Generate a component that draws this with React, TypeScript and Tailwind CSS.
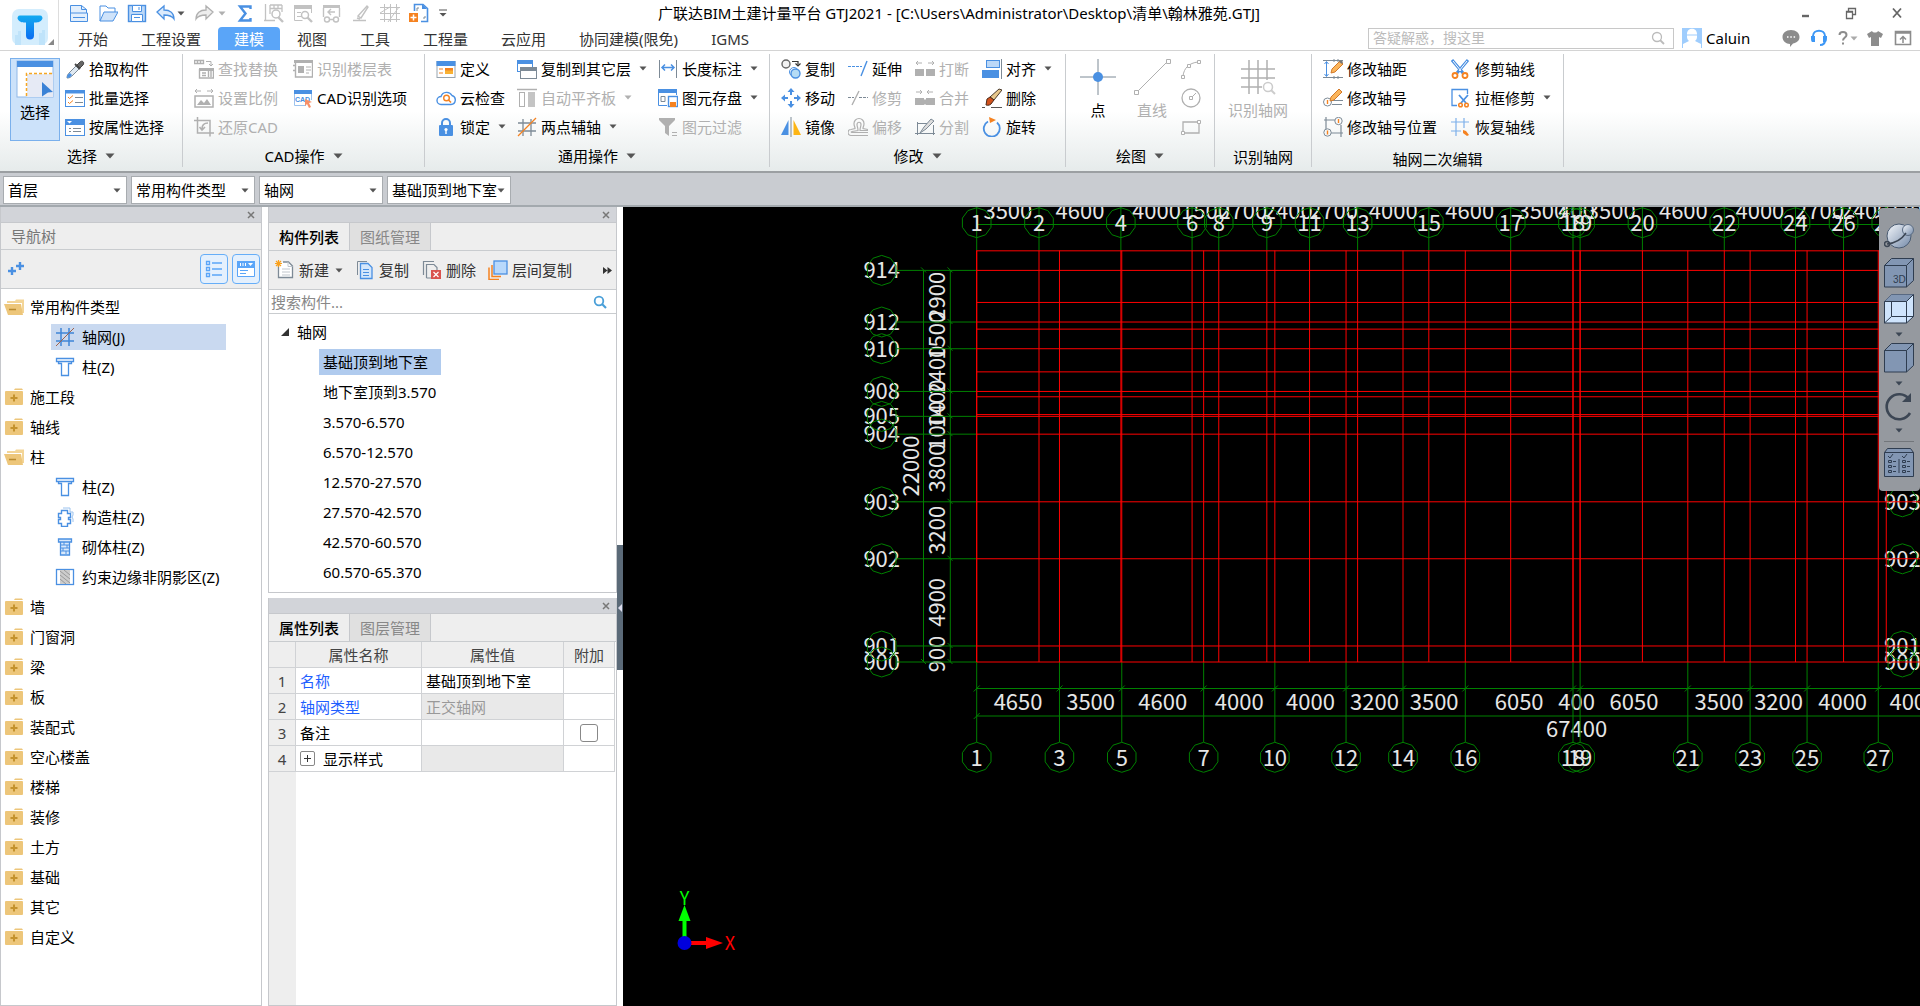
import React, { useState } from 'react';

const B = '#4a90e2';
const G = '#b0b0b0';
const O = '#f58220';
const S = '#7d8a96';

const Svg: React.FC<{ size?: number; box?: number; className?: string; children: React.ReactNode }> = ({
  size = 20,
  box = 20,
  className = '',
  children,
}) => (
  <svg width={size} height={size} viewBox={`0 0 ${box} ${box}`} fill="none" className={`shrink-0 ${className}`} aria-hidden="true">
    {children}
  </svg>
);

const Caret: React.FC<{ className?: string }> = ({ className = 'text-[#555]' }) => (
  <svg width="8" height="5" viewBox="0 0 8 5" className={`shrink-0 ${className}`} aria-hidden="true">
    <path d="M0.5 0.5h7L4 4.5z" fill="currentColor" />
  </svg>
);

// Ribbon icons, all on a 20x20 grid
const icons: Record<string, React.ReactNode> = {
  pick: (
    <>
      <path d="M2 19c0-3 1-4 3-6l6-6 3 3-6 6c-2 2-3 3-6 3z" fill="#dfe9f2" stroke={S} />
      <path d="M2 19c0-3 1-4 3-5l2 2c-1 2-3 3-5 3z" fill={B} />
      <path d="M10 5l5 5" stroke="#444" strokeWidth="1.800" />
      <path d="M12 6l3-3c2-2 5 0 3 3l-3 3z" stroke="#444" fill="#666" />
    </>
  ),
  batch: (
    <>
      <rect x="0.5" y="2.5" width="19" height="16" fill="#fff" stroke={B} />
      <path d="M0 2h20v3.500H0z" fill={B} />
      <path d="M3 9l1.500 1.500L8 7.500M3 14l1.500 1.500L8 12.500" stroke={O} />
      <path d="M10 9.500h8M10 14.500h8" stroke={S} />
    </>
  ),
  attr: (
    <>
      <rect x="0.5" y="2.500" width="19" height="16" fill="#fff" stroke={B} />
      <path d="M0 2h20v6H0z" fill={B} />
      <path d="M2 4h5L4.500 6.500z" fill="#fff" />
      <path d="M4 11.500h2M8 11.500h8M4 14.500h2M8 14.500h8" stroke={S} />
    </>
  ),
  replace: (
    <>
      <path d="M0.500 1.500h9v3h-9zM3.500 1.500v3M6.500 1.500v3" stroke={G} strokeWidth="1.300" />
      <path d="M12 2.500h5v4M15 5l2 2 2-2" stroke={G} />
      <path d="M5 9h15v3H5z" fill={G} />
      <path d="M5.500 10v9h14v-9M8 14h4M8 16.500h4M14.500 12v6M17 12v6" stroke={G} strokeWidth="1.400" />
    </>
  ),
  scale: (
    <>
      <path d="M1 3h6M3 1L1 3l2 2M13 3h6M17 1l2 2-2 2" stroke={G} />
      <rect x="1" y="8" width="18" height="11" stroke={G} strokeWidth="1.500" />
      <path d="M3 17l4-5 3 3 3-4 4 6z" fill={G} />
    </>
  ),
  restore: (
    <>
      <path d="M0 3.500h16v16M3.500 0v16H20" stroke={G} strokeWidth="1.500" />
      <path d="M14 6c-4 0-6 2-6 6M5.500 10l2.500 3 3-3" stroke={G} strokeWidth="1.600" />
    </>
  ),
  floors: (
    <>
      <path d="M2.500 4v14h17V3M0 6.500h3M0 11.500h3" stroke={G} strokeWidth="1.400" />
      <path d="M1 1h19v3H1zM5 7h6v7H5z" fill={G} />
      <path d="M13 8h5M13 11h5M13 14h3" stroke={G} />
    </>
  ),
  cad: (
    <>
      <path d="M1 2h18v4H1z" fill={B} />
      <path d="M1.500 6v11.500H13M18.500 6v6" stroke="#9cc3ee" />
      <text x="2" y="14" fontSize="7" fontWeight="bold" fill={B} fontFamily="Liberation Sans, sans-serif">CAD</text>
      <path d="M12 11l7 3-3 1 2 4-2 1-2-4-2 2z" fill="#f79068" />
    </>
  ),
  define: (
    <>
      <rect x="1" y="2.500" width="18" height="16" fill="#fff" stroke="#9aa5af" />
      <path d="M0.500 2h19v5h-19z" fill={B} />
      <path d="M3 10h4M3 14h4" stroke={O} />
      <path d="M9 9h8v6H9z" fill="#f9b233" />
      <path d="M9 9h8v2.500H9z" fill={O} />
    </>
  ),
  cloud: (
    <>
      <path d="M5 16.500a4 4 0 0 1 0-8 6 6 0 0 1 11-1 4.600 4.600 0 0 1-1 9z" stroke={B} strokeWidth="1.400" />
      <circle cx="10.500" cy="10" r="2.800" stroke={O} strokeWidth="1.400" />
      <path d="M12.500 12l2.500 2.500" stroke={O} strokeWidth="1.600" />
    </>
  ),
  lock: (
    <>
      <path d="M6 9V6a4 4 0 0 1 8 0v3" stroke={B} strokeWidth="2" />
      <rect x="3" y="8" width="14" height="11" rx="1" fill={B} />
      <circle cx="10" cy="12.500" r="1.600" fill="#fff" />
      <path d="M10 13v4" stroke="#fff" strokeWidth="1.400" />
    </>
  ),
  copyFloor: (
    <>
      <rect x="0.500" y="1.500" width="15" height="11" fill="#fff" stroke={B} />
      <path d="M0 1h16v4H0z" fill={B} />
      <rect x="3.500" y="8.500" width="16" height="11" fill="#fff" stroke={S} />
      <path d="M3 8h17v4H3z" fill={S} />
    </>
  ),
  slab: (
    <>
      <path d="M0 1.500h20" stroke={G} strokeWidth="1.500" />
      <rect x="2.500" y="4.500" width="5" height="14" stroke={G} />
      <path d="M11 4h7v15h-7z" fill="#c4c4c4" />
    </>
  ),
  aux: (
    <>
      <path d="M6 2v17M14 2v17M1 6h18M1 14h18" stroke={S} strokeWidth="1.300" />
      <path d="M1 19L19 1" stroke={O} strokeWidth="1.200" />
    </>
  ),
  length: (
    <>
      <path d="M1.500 1v18M18.500 1v18" stroke={S} />
      <path d="M4 8.500h12M7 5.500l-3 3 3 3M13 5.500l3 3-3 3" stroke={B} strokeWidth="1.500" />
    </>
  ),
  save: (
    <>
      <path d="M0.500 1v16.500H9M18.500 1v6" stroke={B} />
      <path d="M0 1h19v4H0z" fill={B} />
      <path d="M3 8.500h4v5H3z" stroke={S} />
      <rect x="10.500" y="8.500" width="9" height="10" fill="#fff" stroke={B} strokeWidth="1.400" />
      <path d="M12 14h6v5h-6z" fill={O} />
    </>
  ),
  filter: (
    <>
      <path d="M1 1h16v2l-6 6v10l-4-3V9L1 3z" fill={G} />
      <path d="M14 15.500h5M14 18.500h5" stroke={G} />
    </>
  ),
  copy: (
    <>
      <circle cx="5" cy="5" r="4" fill="#f2f2f2" stroke="#666" strokeWidth="1.400" />
      <circle cx="13" cy="13" r="4.500" stroke={B} />
      <circle cx="14.500" cy="14.500" r="4.500" fill="#b5dcf5" stroke={B} strokeWidth="1.400" />
      <path d="M11 2.500h6v3M14.500 4.500L17 7l2.500-2.500" stroke="#333" strokeWidth="1.200" />
    </>
  ),
  move: (
    <>
      <path d="M10 0l3.500 4h-7zM10 20l3.500-4h-7zM0 10l4-3.500v7zM20 10l-4-3.500v7z" fill={B} />
      <path d="M10 3v4M10 13v4M3 10h4M13 10h4" stroke={B} strokeWidth="2" />
    </>
  ),
  mirror: (
    <>
      <path d="M7.500 3v15H0z" fill={B} />
      <path d="M12.500 3v15H20z" fill="#fdb515" />
      <path d="M10 0v20" stroke={S} />
    </>
  ),
  extend: (
    <>
      <path d="M0 7.500h14" stroke={B} strokeDasharray="3 1" />
      <path d="M19 2l-6 15" stroke={B} strokeWidth="1.400" />
    </>
  ),
  trim: (
    <>
      <path d="M0 9.500h6M11 9.500h9" stroke={S} strokeDasharray="3 1" />
      <path d="M11 3L4 17" stroke={G} strokeWidth="1.400" />
    </>
  ),
  offset: (
    <path
      d="M20 18.500H3a3 3 0 0 1 0-6l4-1c0-2-1-2-1-5a5 5 0 0 1 10 0c0 3-1 3-1 5l5 1M20 15.500H4c-1 0-1-1 0-1l6-1c0-3-1-4-1-6 0-3 4-3 4 0 0 2-1 3-1 6h8"
      stroke={G}
      strokeWidth="1.200"
    />
  ),
  breakIt: (
    <>
      <path d="M0 10h9v7H0zM11 10h9v7h-9z" fill={G} />
      <path d="M1 4h6M3 2L1 4l2 2M13 4h6M17 2l2 2-2 2" stroke={G} />
    </>
  ),
  merge: (
    <>
      <path d="M0 10h9v7H0zM9 11.500h2v5H9zM11 10h9v7h-9z" fill={G} />
      <path d="M1 4h6M5 2l2 2-2 2M12 4h6M14 2l-2 2 2 2" stroke={G} />
    </>
  ),
  split: (
    <>
      <path d="M2 6.500h10M2.500 5v13M0 16.500h20M18.500 8v10" stroke={S} />
      <path d="M5 16l4-6 7-8 3 2-8 8z" fill="#ddd" stroke={S} />
    </>
  ),
  align: (
    <>
      <rect x="4.500" y="1.500" width="13" height="7" fill="#bcd8f7" stroke={B} />
      <path d="M0 11h17v8H0z" fill={B} />
      <path d="M19.500 0v20" stroke={S} />
    </>
  ),
  erase: (
    <>
      <path d="M8 9l9-8 3 1-8 10z" fill="#e8c88c" stroke="#4a3a2a" />
      <path d="M5 11l3-2 4 3-3 4c-2 2-5 1-5 1z" fill="#d2521c" stroke="#4a2a1a" />
      <path d="M0 19.500h3M9 19.500h11" stroke="#555" />
    </>
  ),
  rotate: (
    <>
      <path d="M6 4.500a8 8 0 1 0 9 1" stroke={B} strokeWidth="1.800" />
      <path d="M7 0l7 3-6 3z" fill={O} />
    </>
  ),
  axisGap: (
    <>
      <path d="M3.500 3v14M1.500 5l2-2.500 2 2.500M1.500 15l2 2.500 2-2.500" stroke={B} />
      <path d="M0 1.500h20M0 18.500h20M11 0v3M15 0v3M11 17v3M15 17v3" stroke={S} />
      <path d="M8 14l1-4 8-8 3 3-8 8z" fill="#fbb55b" stroke="#d27a2a" />
      <path d="M16 3l2-2 2 2-1 2z" fill="#777" />
    </>
  ),
  axisNo: (
    <>
      <path d="M9 12.500h11M9 16.500h10" stroke={S} />
      <circle cx="4.500" cy="14" r="4" stroke={S} />
      <path d="M4.500 12v4" stroke={O} strokeWidth="1.400" />
      <path d="M7 13l1-4 8-8 3 3-8 8z" fill="#fbb55b" stroke="#d27a2a" />
    </>
  ),
  axisPos: (
    <>
      <path d="M3 0v12M1 3h11M8 16h12M18 8v12" stroke={S} strokeWidth="1.200" />
      <circle cx="15.500" cy="4" r="3.700" stroke={S} />
      <circle cx="4.500" cy="15.500" r="3.700" stroke={S} />
      <path d="M15.500 2v4M4.500 13.500v4" stroke={O} strokeWidth="1.400" />
    </>
  ),
  scissors: (
    <>
      <path d="M1 1l11 13M17 1L6 14" stroke={B} strokeWidth="3" />
      <path d="M2 2l8 10M16 2L8 12" stroke="#fff" />
      <circle cx="4" cy="16.500" r="2.500" stroke={O} strokeWidth="1.800" />
      <circle cx="14" cy="16.500" r="2.500" stroke={O} strokeWidth="1.800" />
    </>
  ),
  boxTrim: (
    <>
      <path d="M16.500 6V1.500H1v16h5" stroke={B} strokeWidth="1.300" />
      <path d="M8 7l7 8M17 7l-7 8" stroke={B} strokeWidth="1.800" />
      <circle cx="9.500" cy="17" r="1.800" stroke={O} strokeWidth="1.500" />
      <circle cx="15.500" cy="17" r="1.800" stroke={O} strokeWidth="1.500" />
    </>
  ),
  recover: (
    <>
      <path d="M5 1v18M13 1v10M0 5h18M0 14h10" stroke="#7db0ea" strokeWidth="1.200" />
      <path d="M12 13l3 1 3 4-2 1-4-3z" fill={O} />
    </>
  ),
  arc: (
    <>
      <path d="M2 17C3 9 8 4 17 3" stroke={G} />
      <path d="M0.500 16.500h3v3h-3zM6.500 5.500h3v3h-3zM16.500 1.500h3v3h-3z" fill="#fff" stroke={G} />
    </>
  ),
  circle: (
    <>
      <circle cx="10" cy="10" r="9" stroke={G} strokeWidth="1.300" />
      <path d="M10 10l5-5" stroke={G} />
      <path d="M8.500 8.500h3v3h-3z" fill="#fff" stroke={G} />
    </>
  ),
  rect: (
    <>
      <path d="M2 5h16v11H2z" stroke={G} strokeWidth="1.300" />
      <path d="M0.500 14.500h3v3h-3zM16.500 3.500h3v3h-3z" fill="#fff" stroke={G} />
    </>
  ),
};

interface Item {
  icon: string;
  label: string;
  off?: boolean;
  caret?: boolean;
}

const RibbonColumn: React.FC<{ items: Item[] }> = ({ items }) => (
  <div className="flex shrink-0 flex-col">
    {items.map((it) => (
      <button
        key={it.label}
        type="button"
        disabled={it.off}
        className={`flex h-[29px] items-center gap-1 whitespace-nowrap ${it.off ? 'text-[#b0b0b0]' : 'text-black'}`}
      >
        <Svg>{icons[it.icon]}</Svg>
        <span>{it.label}</span>
        {it.caret && <Caret className={it.off ? 'ml-1 text-[#b0b0b0]' : 'ml-1 text-[#555]'} />}
      </button>
    ))}
  </div>
);

const RibbonGroup: React.FC<{ title: string; caret?: boolean; className: string; children: React.ReactNode }> = ({
  title,
  caret,
  className,
  children,
}) => (
  <section className={`mt-[3px] mb-1 flex shrink-0 flex-col border-r border-[#c9cccf] ${className}`}>
    <div className="flex h-[87px] pl-[11px]">{children}</div>
    <div className={`flex flex-1 items-center justify-center gap-2 whitespace-nowrap text-black ${caret ? 'pt-1' : 'pt-2'}`}>
      {title}
      {caret && (
        <svg width="10" height="6" viewBox="0 0 10 6" aria-hidden="true">
          <path d="M0.500 0.500h9L5 5.500z" fill="#555" />
        </svg>
      )}
    </div>
  </section>
);

const QuickAccess: React.FC = () => (
  <div className="flex h-[26px] items-center gap-[9px] pl-[10px]">
    <button type="button" aria-label="新建">
      <Svg>
        <path d="M1.500 10V2.500h11l5 4V10M1.500 10h17v8.500h-17z" fill="#e3effc" stroke={B} />
        <path d="M12.500 2.500v4h5M4 14.500h12" stroke={B} />
      </Svg>
    </button>
    <button type="button" aria-label="打开">
      <Svg>
        <path d="M2 18V3h6l2 2h7v4" stroke={B} />
        <path d="M2 18L6 9h14l-5 9z" fill="#cfe3fa" stroke={B} />
      </Svg>
    </button>
    <button type="button" aria-label="保存">
      <Svg>
        <rect x="1.500" y="2.500" width="17" height="16" fill="#bcd8f7" stroke={B} strokeWidth="1.400" />
        <path d="M5.500 2.500h9v6h-9zM4.500 11.500h11v7h-11z" fill="#fff" stroke={B} />
        <path d="M12 4v3M7 14.500h6" stroke={B} />
      </Svg>
    </button>
    <button type="button" aria-label="撤销" className="flex items-center gap-px">
      <Svg>
        <path d="M1 9l7-6v4c6 0 10 3 10 9-2-3-5-4-10-4v4z" fill="#dcebfc" stroke={B} strokeWidth="1.300" />
      </Svg>
      <Caret />
    </button>
    <button type="button" aria-label="重做" className="flex items-center gap-1">
      <Svg>
        <path d="M19 9l-7-6v4C6 7 2 10 2 16c2-3 5-4 10-4v4z" fill="#eee" stroke={G} strokeWidth="1.300" />
      </Svg>
      <Caret className="text-[#b0b0b0]" />
    </button>
    <button type="button" aria-label="汇总计算">
      <Svg>
        <path d="M15.500 6V3.500H5l5.500 7L5 17.500h10.500V15" stroke={B} strokeWidth="2.400" />
      </Svg>
    </button>
    <button type="button" aria-label="查看工程量">
      <Svg>
        <path d="M1.500 1v17M0 17.500h11M6 2h12M6 2v9M6 5.500h12M10 2v4M14 2v4M18 2v7" stroke="#c2c2c2" strokeWidth="1.300" />
        <circle cx="12" cy="11" r="4" stroke="#c2c2c2" strokeWidth="1.500" />
        <path d="M14 14l5 5" stroke="#c2c2c2" strokeWidth="2.400" />
      </Svg>
    </button>
    <button type="button" aria-label="查看计算式">
      <Svg>
        <path d="M1 2h18v4H1z" fill="#c2c2c2" />
        <path d="M1.500 5v12.500h8M18.500 5v5M4 9.500h4M4 13.500h4" stroke="#c2c2c2" />
        <circle cx="12" cy="12" r="3.500" stroke="#c2c2c2" strokeWidth="1.500" />
        <path d="M14.500 14.500L19 19" stroke="#c2c2c2" strokeWidth="2.400" />
      </Svg>
    </button>
    <button type="button" aria-label="返回">
      <Svg>
        <path d="M1 2h17v3H1z" fill="#c2c2c2" />
        <path d="M1.500 5v9M17.500 5v9M6 9h7M9 6L6 9l3 3M8 16.500h4" stroke="#c2c2c2" strokeWidth="1.400" />
        <circle cx="5" cy="16.500" r="2.500" stroke="#c2c2c2" strokeWidth="1.400" />
        <circle cx="14" cy="16.500" r="2.500" stroke="#c2c2c2" strokeWidth="1.400" />
      </Svg>
    </button>
    <button type="button" aria-label="编辑">
      <Svg>
        <path d="M7 13l9-10 1 1-7 11zM2 17.500h13M6 15l3 1" stroke="#c2c2c2" strokeWidth="1.400" />
      </Svg>
    </button>
    <button type="button" aria-label="网格">
      <Svg>
        <path d="M4.500 1v18M10.500 1v18M16.500 1v18M0 4.500h20M0 10.500h20M0 16.500h20M0 10l10-6M8 19L19 4" stroke="#c2c2c2" />
      </Svg>
    </button>
    <button type="button" aria-label="导入" className="flex items-center gap-[10px]">
      <Svg>
        <path d="M5.500 8V1.500H14l4.500 4v13H12" stroke={B} strokeWidth="1.600" />
        <path d="M13 1v5h5" fill={B} />
        <path d="M8 8V5h2M16 13v2h-2" stroke={S} />
        <path d="M0 10h9v9H0z" fill={O} />
        <path d="M4.500 11.500v6M1.500 14.500h6" stroke="#fff" strokeWidth="1.500" />
      </Svg>
      <svg width="8" height="8" viewBox="0 0 8 8" aria-hidden="true">
        <path d="M0 1h8" stroke="#555" />
        <path d="M0.500 4h7L4 7.500z" fill="#555" />
      </svg>
    </button>
  </div>
);

const tabs = ['开始', '工程设置', '建模', '视图', '工具', '工程量', '云应用', '协同建模(限免)', 'IGMS'];

const Header: React.FC = () => {
  const [active, setActive] = useState('建模');
  return (
    <header className="flex h-[51px] border-b border-[#d4d4d4] bg-white">
      <div className="flex w-[59px] items-end gap-0 border-r border-[#ddd] pb-[5px] pl-3">
        <svg width="36" height="36" viewBox="0 0 36 36" aria-hidden="true">
          <defs>
            <linearGradient id="logoT" x1="0" y1="0" x2="0" y2="1">
              <stop offset="0" stopColor="#12aaf0" />
              <stop offset="1" stopColor="#0b6df2" />
            </linearGradient>
          </defs>
          <rect width="36" height="36" rx="7" fill="#d3edfd" />
          <path d="M3 36V26h3v-4h3v14M27 36V24h3v-3h3v15" fill="#bfe3fa" />
          <path d="M8 6.500h20a2.500 2.500 0 0 1 2 4c-2 3-5 3-8 3v13a4 4 0 0 1-8 0v-13c-3 0-6 0-8-3a2.500 2.500 0 0 1 2-4z" fill="url(#logoT)" />
        </svg>
        <svg width="6" height="6" viewBox="0 0 6 6" aria-hidden="true">
          <path d="M6 0v6H0z" fill="#888" />
        </svg>
      </div>
      <div className="flex min-w-0 flex-1 flex-col">
        <div className="flex h-[26px] items-center justify-between">
          <div className="flex-1">
            <QuickAccess />
          </div>
          <h1 className="mr-[45px] whitespace-nowrap text-black">
            广联达BIM土建计量平台 GTJ2021 - [C:\Users\Administrator\Desktop\清单\翰林雅苑.GTJ]
          </h1>
          <div className="flex flex-1 items-center justify-end gap-8 pr-4 text-[#666]">
            <button type="button" aria-label="最小化">
              <Svg size={14} box={14}><path d="M4 10h7" stroke="currentColor" strokeWidth="2.400" /></Svg>
            </button>
            <button type="button" aria-label="还原">
              <Svg size={14} box={14}>
                <path d="M4.500 5V2.500h7v6H9M4 2.500h8" stroke="currentColor" strokeWidth="1.300" />
                <path d="M2.500 5.500h6v7h-6zM2 6h7" stroke="currentColor" strokeWidth="1.300" />
              </Svg>
            </button>
            <button type="button" aria-label="关闭">
              <Svg size={14} box={14}><path d="M3 2.500l8 9M11 2.500l-8 9" stroke="currentColor" strokeWidth="1.800" /></Svg>
            </button>
          </div>
        </div>
        <div className="flex flex-1 items-center justify-between">
          <nav className="flex gap-px self-end pl-[3px]">
            {tabs.map((t) => (
              <button
                key={t}
                type="button"
                onClick={() => setActive(t)}
                className={`h-[23px] rounded-t px-4 leading-[22px] ${
                  active === t ? 'bg-[#5aa5f8] text-white' : 'text-[#333]'
                }`}
              >
                {t}
              </button>
            ))}
          </nav>
          <div className="flex items-center pr-2">
            <label className="flex h-[21px] w-[306px] items-center border border-[#c8c8c8] pr-2">
              <input
                type="text"
                aria-label="搜索"
                placeholder="答疑解惑，搜这里"
                className="min-w-0 flex-1 bg-transparent px-1 text-sm outline-none placeholder:text-[#bbb]"
              />
              <Svg size={14} box={14}>
                <circle cx="6" cy="6" r="4.500" stroke="#bbb" strokeWidth="1.300" />
                <path d="M9 9l4 4" stroke="#bbb" strokeWidth="1.800" />
              </Svg>
            </label>
            <Svg className="ml-2">
              <path d="M0 0h20v20H0z" fill="#9fcdfd" />
              <path d="M5 6c0-7 10-7 10 0v3c0 2-1 3-2 4l6 3v4H1v-4l6-3c-1-1-2-2-2-4z" fill="#fff" />
              <path d="M5 7h10" stroke="#9fcdfd" />
            </Svg>
            <span className="ml-1 w-[76px] text-black">Caluin</span>
            <button type="button" aria-label="消息" className="mr-[10px] text-[#8c8c8c]">
              <Svg size={18} box={18}>
                <path d="M9 1c5 0 8.500 3 8.500 7S14 14 11 14.500L8 18v-3C4 15 0.500 12 0.500 8S4 1 9 1z" fill="currentColor" />
                <path d="M5 8h1.500M8.300 8h1.500M11.600 8h1.500" stroke="#fff" strokeWidth="1.500" />
              </Svg>
            </button>
            <button type="button" aria-label="客服" className="mr-2">
              <Svg size={18} box={18}>
                <path d="M3 10V7c0-7 12-7 12 0v4c0 3-2 5-5 5" stroke="#3d97f5" strokeWidth="2" />
                <path d="M1 7h4v6H3c-2 0-2-2-2-6zM17 7h-4v6h2c2 0 2-2 2-6z" fill="#3d97f5" />
              </Svg>
            </button>
            <button type="button" aria-label="帮助" className="mr-2 flex items-center text-[#8c8c8c]">
              <Svg size={14} box={14}>
                <path d="M3.500 4c0-4 7-4 7 0 0 2.500-3.500 2.500-3.500 5.500" stroke="currentColor" strokeWidth="2" />
                <path d="M6 11.500h2v2H6z" fill="currentColor" />
              </Svg>
              <Caret className="text-[#aaa]" />
            </button>
            <button type="button" aria-label="皮肤" className="mr-[10px] text-[#8c8c8c]">
              <Svg size={18} box={18}>
                <path d="M6 2c1 2 5 2 6 0l5 3-2 4-2-1v9H5V8L3 9 1 5z" fill="currentColor" />
              </Svg>
            </button>
            <button type="button" aria-label="收起" className="text-[#8c8c8c]">
              <Svg size={18} box={18}>
                <path d="M1.500 2.500h15v13h-15zM1 4h16" stroke="currentColor" strokeWidth="1.600" />
                <path d="M9 14V8M6 10.500l3-3 3 3" stroke="currentColor" strokeWidth="1.500" />
              </Svg>
            </button>
          </div>
        </div>
      </div>
    </header>
  );
};

const Ribbon: React.FC = () => (
  <div className="flex h-[122px] overflow-hidden border-b-2 border-[#9b9fa2] bg-linear-to-b from-white from-50% to-[#e6ebeb]">
    <RibbonGroup title="选择" caret className="w-[183px]">
      <button
        type="button"
        className="mr-[5px] -ml-px flex h-[83px] w-[50px] shrink-0 flex-col items-center gap-1 self-end border border-[#7ab0ec] bg-[#cce2fa] pt-px text-black"
      >
        <Svg size={38} box={38}>
          <rect x="1" y="1" width="36" height="36" fill="#fff" stroke="#8fb8e8" />
          <path d="M1 1h36v6H1z" fill={B} />
          <path d="M11 14h26v23H11z" fill="#e6eaf5" />
          <path d="M10.500 36V13.500H36" stroke="#f5a623" strokeWidth="1.500" strokeDasharray="3 2" />
          <path d="M26 22l11 10-5 .5-6 4z" fill="#3b82d6" />
        </Svg>
        选择
      </button>
      <RibbonColumn
        items={[
          { icon: 'pick', label: '拾取构件' },
          { icon: 'batch', label: '批量选择' },
          { icon: 'attr', label: '按属性选择' },
        ]}
      />
    </RibbonGroup>
    <RibbonGroup title="CAD操作" caret className="w-[242px]">
      <div className="flex gap-[15px]">
        <RibbonColumn
          items={[
            { icon: 'replace', label: '查找替换', off: true },
            { icon: 'scale', label: '设置比例', off: true },
            { icon: 'restore', label: '还原CAD', off: true },
          ]}
        />
        <RibbonColumn
          items={[
            { icon: 'floors', label: '识别楼层表', off: true },
            { icon: 'cad', label: 'CAD识别选项' },
          ]}
        />
      </div>
    </RibbonGroup>
    <RibbonGroup title="通用操作" caret className="w-[345px]">
      <div className="flex gap-[11px]">
        <RibbonColumn
          items={[
            { icon: 'define', label: '定义' },
            { icon: 'cloud', label: '云检查' },
            { icon: 'lock', label: '锁定', caret: true },
          ]}
        />
        <RibbonColumn
          items={[
            { icon: 'copyFloor', label: '复制到其它层', caret: true },
            { icon: 'slab', label: '自动平齐板', off: true, caret: true },
            { icon: 'aux', label: '两点辅轴', caret: true },
          ]}
        />
        <RibbonColumn
          items={[
            { icon: 'length', label: '长度标注', caret: true },
            { icon: 'save', label: '图元存盘', caret: true },
            { icon: 'filter', label: '图元过滤', off: true },
          ]}
        />
      </div>
    </RibbonGroup>
    <RibbonGroup title="修改" caret className="w-[296px]">
      <div className="flex gap-[13px]">
        <RibbonColumn
          items={[
            { icon: 'copy', label: '复制' },
            { icon: 'move', label: '移动' },
            { icon: 'mirror', label: '镜像' },
          ]}
        />
        <RibbonColumn
          items={[
            { icon: 'extend', label: '延伸' },
            { icon: 'trim', label: '修剪', off: true },
            { icon: 'offset', label: '偏移', off: true },
          ]}
        />
        <RibbonColumn
          items={[
            { icon: 'breakIt', label: '打断', off: true },
            { icon: 'merge', label: '合并', off: true },
            { icon: 'split', label: '分割', off: true },
          ]}
        />
        <RibbonColumn
          items={[
            { icon: 'align', label: '对齐', caret: true },
            { icon: 'erase', label: '删除' },
            { icon: 'rotate', label: '旋转' },
          ]}
        />
      </div>
    </RibbonGroup>
    <RibbonGroup title="绘图" caret className="w-[149px]">
      <button type="button" className="mr-4 ml-[2px] flex flex-col items-center gap-1 pt-1 text-black">
        <Svg size={38} box={38}>
          <path d="M19 1v36M1 19h36" stroke={S} />
          <circle cx="19" cy="19" r="5" fill={B} />
        </Svg>
        点
      </button>
      <button type="button" disabled className="mr-[10px] flex flex-col items-center gap-1 pt-1 text-[#b0b0b0]">
        <Svg size={38} box={38}>
          <path d="M4 34L35 3" stroke={G} />
          <path d="M1.500 32.500h4v4h-4zM33.500 1.500h4v4h-4z" fill="#fff" stroke={G} />
        </Svg>
        直线
      </button>
      <div className="flex flex-col">
        {['arc', 'circle', 'rect'].map((n) => (
          <button key={n} type="button" disabled aria-label={n} className="flex h-[29px] items-center">
            <Svg>{icons[n]}</Svg>
          </button>
        ))}
      </div>
    </RibbonGroup>
    <RibbonGroup title="识别轴网" className="w-[97px]">
      <button type="button" disabled className="ml-[2px] flex flex-col items-center gap-1 pt-1 text-[#b0b0b0]">
        <Svg size={38} box={38}>
          <path d="M10 2v34M19 2v34M28 2v20M2 11h34M2 20h34M2 29h21" stroke={G} strokeWidth="1.500" />
          <circle cx="29" cy="29" r="4.500" stroke="#ccc" strokeWidth="1.500" fill="#fff" />
          <path d="M32 32l4 4" stroke="#ccc" strokeWidth="2" />
        </Svg>
        识别轴网
      </button>
    </RibbonGroup>
    <RibbonGroup title="轴网二次编辑" className="w-[252px]">
      <div className="flex gap-[14px]">
        <RibbonColumn
          items={[
            { icon: 'axisGap', label: '修改轴距' },
            { icon: 'axisNo', label: '修改轴号' },
            { icon: 'axisPos', label: '修改轴号位置' },
          ]}
        />
        <RibbonColumn
          items={[
            { icon: 'scissors', label: '修剪轴线' },
            { icon: 'boxTrim', label: '拉框修剪', caret: true },
            { icon: 'recover', label: '恢复轴线' },
          ]}
        />
      </div>
    </RibbonGroup>
  </div>
);

const combos = [
  { label: '楼层', value: '首层' },
  { label: '构件分类', value: '常用构件类型' },
  { label: '构件类型', value: '轴网' },
  { label: '构件', value: '基础顶到地下室' },
];

const ComboBar: React.FC = () => (
  <div className="flex h-[34px] items-end gap-1 border-b-2 border-[#a3a9ae] bg-[#c9ccd1] pb-px pl-[3px]">
    {combos.map((c) => (
      <div key={c.label} className="relative">
        <select
          aria-label={c.label}
          defaultValue={c.value}
          className="block h-[28px] w-[124px] appearance-none border border-[#a8acb0] bg-white pl-1 text-black outline-none"
        >
          <option>{c.value}</option>
        </select>
        <Caret className="pointer-events-none absolute top-3 right-[6px] text-[#555]" />
      </div>
    ))}
  </div>
);

const PanelBar: React.FC = () => (
  <div className="flex h-4 shrink-0 items-center justify-end border-b border-[#c6c8cc] bg-[#d2d4d9] pr-[6px]">
    <button type="button" aria-label="关闭面板">
      <Svg size={8} box={8}>
        <path d="M1 1l6 6M7 1L1 7" stroke="#777" strokeWidth="1.500" />
      </Svg>
    </button>
  </div>
);

const FolderOpen = () => (
  <Svg>
    <path d="M3 4h8l1-1.500h8V16h-2V6H3z" fill="#f3d597" />
    <path d="M0 7h17l2 11H4z" fill="#edc67a" />
    <path d="M5 12.500h7" stroke="#b98a2f" strokeWidth="1.500" />
  </Svg>
);

const FolderClosed = () => (
  <Svg>
    <path d="M10 3l1-1.500h7l1 1.500z" fill="#edc67a" />
    <rect x="1" y="4" width="18" height="14" rx="1" fill="#edc67a" />
    <path d="M10 7.500v7M6.500 11h7" stroke="#c4922f" strokeWidth="2" />
  </Svg>
);

const treeIcons: Record<string, React.ReactNode> = {
  grid: (
    <>
      <path d="M6 1v18M14 1v18M1 6h18M1 14h18" stroke="#3f85d6" strokeWidth="1.500" />
      <path d="M1 19L19 1" stroke="#a0624a" />
    </>
  ),
  column: <path d="M1.500 1.500h17v3h-2v2h-3v12h-7v-12h-3v-2h-2zM4 4.500h12" stroke={B} strokeWidth="1.300" fill="#fff" />,
  structural: (
    <>
      <path d="M8 1h7v4h3v3l-1 2 1 2v3" stroke="#9cc3ee" />
      <path d="M6.500 3.500h6v3h3v4h-2v2h2v4h-3v3h-6v-3h-3v-4h2v-2h-2v-4h3z" stroke={B} strokeWidth="1.400" fill="#fff" />
    </>
  ),
  masonry: (
    <>
      <path d="M3.500 2h13v3h-13zM5.500 5h9v13h-9z" fill="#d9e9fb" stroke={B} strokeWidth="1.300" />
      <path d="M6 8h8M6 11h8M6 14h8M9 5v3M12 8v3M8 11v3M11 14v3" stroke={B} />
    </>
  ),
  hatch: (
    <>
      <rect x="1.500" y="2.500" width="17" height="15" fill="#fff" stroke={B} strokeWidth="1.300" />
      <path d="M5 3h10v14H5z" fill="#ccc" />
      <path d="M5 4l10 8M5 8l10 8M5 12l6 5M9 3l6 5" stroke="#999" />
    </>
  ),
};

interface TreeNode {
  label: string;
  open?: boolean;
  children?: { label: string; icon: string; selected?: boolean }[];
}

const tree: TreeNode[] = [
  {
    label: '常用构件类型',
    open: true,
    children: [
      { label: '轴网(J)', icon: 'grid', selected: true },
      { label: '柱(Z)', icon: 'column' },
    ],
  },
  { label: '施工段' },
  { label: '轴线' },
  {
    label: '柱',
    open: true,
    children: [
      { label: '柱(Z)', icon: 'column' },
      { label: '构造柱(Z)', icon: 'structural' },
      { label: '砌体柱(Z)', icon: 'masonry' },
      { label: '约束边缘非阴影区(Z)', icon: 'hatch' },
    ],
  },
  ...['墙', '门窗洞', '梁', '板', '装配式', '空心楼盖', '楼梯', '装修', '土方', '基础', '其它', '自定义'].map((label) => ({ label })),
];

const NavTree: React.FC = () => (
  <aside className="flex w-[262px] shrink-0 flex-col border-x border-b border-[#c6c8cc]">
    <PanelBar />
    <h2 className="flex h-[27px] items-center border-b border-[#c9cccf] bg-[#eee] pl-[10px] text-[#777]">导航树</h2>
    <div className="flex h-[39px] items-center justify-between border-b border-[#c9cccf] bg-[#eee] pr-px pl-[7px]">
      <button type="button" aria-label="展开">
        <Svg size={16} box={16}>
          <path d="M4 6v8M0 10h8M12 1v8M8 5h8" stroke={B} strokeWidth="2.400" />
        </Svg>
      </button>
      <div className="flex gap-1">
        <button type="button" aria-label="列表" className="flex h-[30px] w-7 items-center justify-center rounded border border-[#66aef8] bg-[#e4f0fd]">
          <Svg size={18} box={18}>
            <path d="M1.500 1.500h3v3h-3zM1.500 7.500h3v3h-3zM1.500 13.500h3v3h-3zM7 3h10M7 9h10M7 15h10" stroke="#5aa5f8" strokeWidth="1.300" />
          </Svg>
        </button>
        <button type="button" aria-label="卡片" className="flex h-[30px] w-7 items-center justify-center rounded border border-[#66aef8] bg-[#e4f0fd]">
          <Svg size={20}>
            <path d="M1.500 2.500h17v15h-17z" fill="#fff" stroke="#5aa5f8" />
            <path d="M1 2h18v7H1z" fill="#5aa5f8" />
            <path d="M4.500 4v3M7 4v3M9.500 4v3" stroke="#fff" />
            <path d="M12 4h5l-2.500 3z" fill="#fff" />
            <path d="M4 11.500h8M4 14.500h6" stroke="#5aa5f8" />
          </Svg>
        </button>
      </div>
    </div>
    <ul className="flex-1 overflow-hidden bg-white pt-[3px]">
      {tree.map((node) => (
        <li key={node.label}>
          <div className="flex h-[30px] items-center gap-[6px] pl-[3px] text-black">
            {node.open ? <FolderOpen /> : <FolderClosed />}
            {node.label}
          </div>
          {node.children && (
            <ul>
              {node.children.map((c) => (
                <li key={c.label} className="flex h-[30px] items-center pl-[50px]">
                  <div
                    className={`flex h-[26px] w-[175px] items-center gap-[7px] pl-1 whitespace-nowrap text-black ${
                      c.selected ? 'bg-[#c9d9f0]' : ''
                    }`}
                  >
                    <Svg>{treeIcons[c.icon]}</Svg>
                    {c.label}
                  </div>
                </li>
              ))}
            </ul>
          )}
        </li>
      ))}
    </ul>
  </aside>
);

const PanelTabs: React.FC<{ names: string[] }> = ({ names }) => (
  <div className="flex h-7 shrink-0 border-b border-[#c9cccf] bg-[#eee]">
    {names.map((n, i) => (
      <button
        key={n}
        type="button"
        className={`w-[81px] border-r border-[#c6c8cc] ${i === 0 ? 'font-medium text-black' : 'bg-[#e0e0e0] text-[#888]'}`}
      >
        {n}
      </button>
    ))}
  </div>
);

const components = [
  '基础顶到地下室',
  '地下室顶到3.570',
  '3.570-6.570',
  '6.570-12.570',
  '12.570-27.570',
  '27.570-42.570',
  '42.570-60.570',
  '60.570-65.370',
];

const ComponentList: React.FC = () => {
  const [selected, setSelected] = useState(components[0]);
  return (
    <section className="flex h-[386px] shrink-0 flex-col border border-t-0 border-[#c6c8cc]">
      <PanelBar />
      <PanelTabs names={['构件列表', '图纸管理']} />
      <div className="flex h-[39px] shrink-0 items-center border-b border-[#c9cccf] bg-[#eee] pl-[6px] text-[#333]">
        <button type="button" className="flex items-center gap-1">
          <Svg>
            <path d="M3.500 5v12.500h14V6l-4-4H8" fill="#fff" stroke={S} strokeWidth="1.300" />
            <path d="M13 2v4.500h4.500M7 9h8M7 12h8M7 15h8" stroke="#c0c6cc" />
            <path d="M3.500 0v7M0 3.500h7M1 1l5 5M6 1L1 6" stroke="#f9a01b" strokeWidth="1.200" />
          </Svg>
          新建
          <Caret className="ml-[2px] text-[#555]" />
        </button>
        <button type="button" className="ml-3 flex items-center gap-1">
          <Svg>
            <path d="M2.500 15V1.500H12" stroke={S} />
            <path d="M5.500 3.500H13l4 4v11H5.500z" fill="#d5e7fb" stroke={B} strokeWidth="1.300" />
            <path d="M8 9.500h6M8 12.500h6M8 15.500h6" stroke={B} />
          </Svg>
          复制
        </button>
        <button type="button" className="ml-[13px] flex items-center gap-1">
          <Svg>
            <path d="M1.500 15V1.500H12M4.500 18V4.500H12l3 3V10M4.500 18H9" stroke={S} strokeWidth="1.200" />
            <path d="M9 10h10v9H9z" fill="#d9534f" />
            <path d="M11.500 12l5 5M16.500 12l-5 5" stroke="#fff" strokeWidth="1.200" />
          </Svg>
          删除
        </button>
        <button type="button" className="ml-3 flex items-center gap-1">
          <Svg>
            <path d="M1 7.500v12h10M4 5v11.500h9" stroke={O} strokeWidth="1.500" />
            <rect x="6" y="1" width="13" height="13" fill="#b9d9fb" stroke={B} strokeWidth="1.300" />
          </Svg>
          层间复制
        </button>
        <button type="button" aria-label="更多" className="mr-1 ml-auto">
          <svg width="9" height="7" viewBox="0 0 9 7" aria-hidden="true">
            <path d="M0 0l4.500 3.500L0 7zM4.500 0L9 3.500 4.500 7z" fill="#333" />
          </svg>
        </button>
      </div>
      <label className="flex h-6 shrink-0 items-center border-b border-[#c9cccf] pr-[9px]">
        <input
          type="text"
          aria-label="搜索构件"
          placeholder="搜索构件..."
          className="min-w-0 flex-1 bg-transparent pl-[2px] outline-none placeholder:text-[#888]"
        />
        <Svg size={14} box={14}>
          <circle cx="6" cy="6" r="4.300" stroke="#4a9fd8" strokeWidth="1.800" />
          <path d="M9 9l4 4" stroke="#4a9fd8" strokeWidth="2.200" />
        </Svg>
      </label>
      <div className="pt-[3px] text-black">
        <div className="flex h-[30px] items-center gap-2 pl-[12px]">
          <svg width="8" height="8" viewBox="0 0 8 8" aria-hidden="true">
            <path d="M8 0v8H0z" fill="#333" />
          </svg>
          轴网
        </div>
        <ul className="flex flex-col gap-1 pt-[2px] pl-[50px]">
          {components.map((c) => (
            <li key={c} className="flex">
              <button
                type="button"
                onClick={() => setSelected(c)}
                className={`h-[26px] w-[122px] pl-1 text-left whitespace-nowrap ${selected === c ? 'bg-[#b0cbee]' : ''}`}
              >
                {c}
              </button>
            </li>
          ))}
        </ul>
      </div>
    </section>
  );
};

const PropertyList: React.FC = () => {
  const td = 'h-[26px] border-r border-b border-[#d0d2d5] px-1';
  return (
    <section className="mt-[5px] flex min-h-0 flex-1 flex-col border border-t-0 border-[#c6c8cc]">
      <PanelBar />
      <PanelTabs names={['属性列表', '图层管理']} />
      <table className="w-[346px] shrink-0 table-fixed border-separate border-spacing-0 text-left text-black">
        <colgroup>
          <col className="w-[27px]" />
          <col className="w-[126px]" />
          <col className="w-[142px]" />
          <col />
        </colgroup>
        <thead>
          <tr className="bg-[#eee] text-center text-[#444]">
            <th className={td} aria-label="序号" />
            <th className={`${td} font-normal`}>属性名称</th>
            <th className={`${td} font-normal`}>属性值</th>
            <th className={`${td} font-normal`}>附加</th>
          </tr>
        </thead>
        <tbody>
          <tr>
            <td className={`${td} bg-[#eee] text-center text-[#444]`}>1</td>
            <td className={`${td} text-[#1f5fff]`}>名称</td>
            <td className={td}>基础顶到地下室</td>
            <td className={td} />
          </tr>
          <tr>
            <td className={`${td} bg-[#eee] text-center text-[#444]`}>2</td>
            <td className={`${td} text-[#1f5fff]`}>轴网类型</td>
            <td className={`${td} bg-[#e9e9e9] text-[#999]`}>正交轴网</td>
            <td className={td} />
          </tr>
          <tr>
            <td className={`${td} bg-[#eee] text-center text-[#444]`}>3</td>
            <td className={td}>备注</td>
            <td className={td} />
            <td className={td}>
              <input
                type="checkbox"
                aria-label="备注附加"
                className="mx-auto block size-[18px] appearance-none rounded-[3px] border border-[#888] bg-white"
              />
            </td>
          </tr>
          <tr>
            <td className={`${td} bg-[#eee] text-center text-[#444]`}>4</td>
            <td className={td}>
              <div className="flex items-center gap-2">
                <button type="button" aria-label="展开显示样式" className="flex size-[15px] items-center justify-center rounded-[2px] border border-[#888]">
                  <Svg size={7} box={7}><path d="M3.500 0v7M0 3.500h7" stroke="#333" /></Svg>
                </button>
                显示样式
              </div>
            </td>
            <td className={`${td} bg-[#e9e9e9]`} />
            <td className={td} />
          </tr>
        </tbody>
      </table>
      <div className="w-[27px] flex-1 bg-[#eee]" />
    </section>
  );
};

// Drawing: model millimetres are mapped to canvas pixels
const SCALE = 0.0178;
const X0 = 353.7;
const Y0 = 455;
const px = (mm: number) => X0 + mm * SCALE;
const py = (mm: number) => Y0 - mm * SCALE;

const topSpans = [3500, 4600, 4000, 1500, 2700, 2400, 2700, 4000, 4600, 3500, 400, 3500, 4600, 4000, 2700, 2400, 2700];
const topNames = ['1', '2', '4', '6', '8', '9', '11', '13', '15', '17', '18', '19', '20', '22', '24', '26', '28'];
const bottomSpans = [4650, 3500, 4600, 4000, 4000, 3200, 3500, 6050, 400, 6050, 3500, 3200, 4000, 4000];
const bottomNames = ['1', '3', '5', '7', '10', '12', '14', '16', '18', '19', '21', '23', '25', '27'];
const leftSpans = [900, 4900, 3200, 3800, 1000, 1400, 2400, 1500, 2900];
const leftNames = ['900', '901', '902', '903', '904', '905', '908', '910', '912', '914'];
const rightAxes = [13900, 14900, 16300, 18700, 20200, 23100];

const positions = (spans: number[]) => spans.reduce<number[]>((acc, s) => [...acc, acc[acc.length - 1] + s], [0]);
const topPos = positions(topSpans);
const bottomPos = positions(bottomSpans);
const leftPos = positions(leftSpans);

const bubble = (cx: number, cy: number) =>
  Array.from({ length: 10 }, (_, i) => {
    const a = (i * Math.PI) / 5;
    return `${(cx + 15 * Math.sin(a)).toFixed(1)},${(cy - 15 * Math.cos(a)).toFixed(1)}`;
  }).join(' ');

const Drawing: React.FC = () => (
  <svg
    className="block h-full w-full font-['Noto_Sans_CJK_SC',sans-serif] text-[22px]"
    fill="none"
    role="img"
    aria-label="轴网"
  >
    <g fill="#e6e6e6" textAnchor="middle">
      {leftNames.map((n, i) => (
        <React.Fragment key={n}>
          <text x={258.7} y={py(leftPos[i]) + 8}>{n}</text>
          <text x={1279.4} y={py(leftPos[i]) + 8}>{n}</text>
        </React.Fragment>
      ))}
      {leftSpans.map((s, i) => {
        const y = py(leftPos[i] + s / 2);
        return (
          <text key={i} x={314.500} y={y + 8} transform={`rotate(-90 314.500 ${y})`}>{s}</text>
        );
      })}
      <text x={287.500} y={267} transform="rotate(-90 287.500 259)">22000</text>
      {bottomSpans.map((s, i) => (
        <text key={i} x={px(bottomPos[i] + s / 2)} y={503}>{s}</text>
      ))}
      <text x={953.600} y={530}>67400</text>
      {topSpans.map((s, i) => (
        <text key={i} x={px(topPos[i] + s / 2)} y={12}>{s}</text>
      ))}
    </g>
    <g stroke="#008000">
      <path d={`M${X0} 17.500H2000M${X0} 481.500H2000M${X0} 509H2000M300.500 ${py(22000)}V${Y0}M327.300 ${py(22000)}V${Y0}`} />
      <path d={topPos.map((p) => `M${px(p)} 0V43.500`).join('')} />
      <path d={bottomPos.map((p) => `M${px(p)} ${Y0}V535M${px(p) - 3} 484.500l6-6`).join('')} />
      <path d={leftPos.map((p) => `M274 ${py(p)}H${X0}M324.500 ${py(p) - 3}l5 5`).join('')} />
      <path d={`M${X0 - 3} 512l6-6M298 ${py(22000) - 3}l5 5M298 ${Y0 - 3}l5 5`} />
      {leftNames.map((n, i) => (
        <React.Fragment key={n}>
          <polygon points={bubble(258.700, py(leftPos[i]))} />
          <polygon points={bubble(1279.400, py(leftPos[i]))} />
        </React.Fragment>
      ))}
      {topNames.map((n, i) => (
        <polygon key={n} points={bubble(px(topPos[i]), 15.700)} />
      ))}
      {bottomNames.map((n, i) => (
        <polygon key={n} points={bubble(px(bottomPos[i]), 550.300)} />
      ))}
    </g>
    <g stroke="#ff0000">
      <path d={[...topPos, ...bottomPos].map((p) => `M${px(p)} 43.500V${Y0}`).join('')} />
      <path d={[...leftPos, ...rightAxes].map((p) => `M${X0} ${py(p)}H2000`).join('')} />
    </g>
    <g fill="#e6e6e6" textAnchor="middle">
      {topNames.map((n, i) => (
        <text key={n} x={px(topPos[i])} y={24}>{n}</text>
      ))}
      {bottomNames.map((n, i) => (
        <text key={n} x={px(bottomPos[i])} y={559}>{n}</text>
      ))}
    </g>
    {/* UCS marker */}
    <path d="M61.500 736V710" stroke="#0f0" strokeWidth="4" />
    <path d="M61.500 698l6 16h-12z" fill="#0f0" />
    <path d="M61 736h27" stroke="#f00" strokeWidth="4" />
    <path d="M100 736l-17-6v12z" fill="#f00" />
    <circle cx="61.500" cy="736" r="7" fill="#00d" />
    <text x="61.500" y="698" textAnchor="middle" fill="#0f0" fontSize="18">Y</text>
    <text x="107" y="743" textAnchor="middle" fill="#f00" fontSize="18">X</text>
  </svg>
);

const Cube: React.FC<{ text?: string }> = ({ text }) => (
  <Svg size={30} box={30}>
    <path d="M0.500 7.500l7-7h22v22l-7 6.500h-22z" fill="#8296b3" stroke="#2f3d50" />
    <path d="M0.500 7.500h22V29M22.500 7.500l7-7" stroke="#2f3d50" />
    {text && <text x="9" y="25" fontSize="10" fill="#2f3d50" fontFamily="Liberation Sans, sans-serif">{text}</text>}
  </Svg>
);

const ViewBar: React.FC = () => (
  <div className="absolute top-px right-0 flex h-[283px] w-[41px] flex-col items-center rounded bg-[#95999f] pt-3 pr-[2px] text-[#3c4654]">
    <button type="button" aria-label="动态观察">
      <Svg size={30} box={30}>
        <defs>
          <linearGradient id="ball" x1="0" y1="0" x2="1" y2="1">
            <stop offset="0" stopColor="#f4f7fb" />
            <stop offset="1" stopColor="#7389a8" />
          </linearGradient>
        </defs>
        <circle cx="15" cy="16" r="12" fill="url(#ball)" stroke="#4a5b72" />
        <circle cx="24" cy="10" r="5.500" fill="url(#ball)" stroke="#5a6b82" />
        <path d="M3 24c9-1 15-5 19-11" stroke="#3c4654" strokeWidth="1.500" />
        <circle cx="3" cy="24" r="2.500" stroke="#3c4654" strokeWidth="1.500" />
      </Svg>
    </button>
    <button type="button" aria-label="三维" className="mt-2"><Cube text="3D" /></button>
    <button type="button" aria-label="俯视" className="mt-[6px]">
      <Svg size={30} box={30}>
        <path d="M0.500 7.500l7-7h22v22l-7 6.500h-22z" fill="#cfe4fc" stroke="#2f3d50" />
        <path d="M0.500 7.500l7-7h22l-7 7z" fill="#8296b3" />
        <path d="M0.500 7.500h22V29M22.500 7.500l7-7M7.500 7.500v15h22M7.500 22.500l-7 6.500" stroke="#2f3d50" />
      </Svg>
    </button>
    <Caret className="mt-2" />
    <button type="button" aria-label="显示模式" className="mt-[6px]"><Cube /></button>
    <Caret className="mt-2" />
    <button type="button" aria-label="旋转视图" className="mt-[6px]">
      <Svg size={30} box={30}>
        <path d="M25 7a12.500 12.500 0 1 0 1 14" stroke="currentColor" strokeWidth="2.600" />
        <path d="M27 1v9h-9z" fill="currentColor" />
      </Svg>
    </button>
    <Caret className="mt-[6px]" />
    <div className="mt-2 h-px w-[30px] bg-[#72767b]" />
    <button type="button" aria-label="显示设置" className="mt-[5px]">
      <Svg size={30} box={30}>
        <path d="M0.500 5.500l3-4h23l3 4v24h-29zM0.500 5.500h29" fill="#8296b3" stroke="#2f3d50" />
        <path d="M15 12v14M4 9l2 2 3-4M18 9l2 2 3-4" stroke="#2f3d50" />
        <path d="M4.500 13.500h3v2h-3zM4.500 18.500h3v2h-3zM4.500 23.500h3v2h-3zM18.500 13.500h3v2h-3zM18.500 18.500h3v2h-3zM18.500 23.500h3v2h-3z" stroke="#2f3d50" />
        <path d="M9 14.500h3M9 19.500h3M9 24.500h3M23 14.500h3M23 19.500h3M23 24.500h3" stroke="#2f3d50" />
      </Svg>
    </button>
  </div>
);

const App: React.FC = () => {
  return (
    <div className="flex h-screen flex-col overflow-hidden bg-white font-['Noto_Sans','Noto_Sans_CJK_SC',sans-serif] text-[15px] leading-5">
      <Header />
      <Ribbon />
      <ComboBar />
      <main className="flex min-h-0 flex-1">
        <NavTree />
        <div className="ml-[6px] flex w-[349px] shrink-0 flex-col">
          <ComponentList />
          <PropertyList />
        </div>
        <div className="flex w-[6px] shrink-0 flex-col">
          <button
            type="button"
            aria-label="收起面板"
            className="mt-[338px] flex h-[125px] items-center justify-center bg-[#5b6a78]"
          >
            <svg width="4" height="8" viewBox="0 0 4 8" aria-hidden="true">
              <path d="M4 0v8L0 4z" fill="#dde" />
            </svg>
          </button>
        </div>
        <div className="relative min-w-0 flex-1 overflow-hidden bg-black">
          <Drawing />
          <ViewBar />
        </div>
      </main>
    </div>
  );
};

export default App;
